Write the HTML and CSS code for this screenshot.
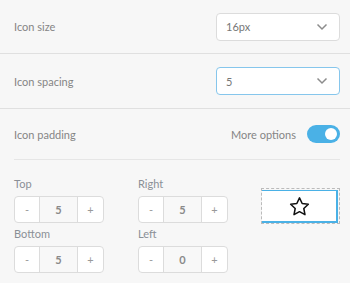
FILE: index.html
```html
<!DOCTYPE html>
<html lang="en">
<head>
    <meta charset="UTF-8">
    <meta name="viewport" content="width=device-width, initial-scale=1.0">
    <title>Icon settings</title>
    <link rel="stylesheet" href="styles.css">
</head>
<body>
    <!-- Icon size -->
    <div class="row">
        <span class="label">Icon size</span>
        <div class="select">
            <span>16px</span>
            <svg class="chevron" width="12" height="8" viewBox="0 0 12 8"><path d="M1.5 1.5l4.5 4.5 4.5-4.5" fill="none" stroke="#8c8c8c" stroke-width="1.5"/></svg>
        </div>
    </div>

    <!-- Icon spacing -->
    <div class="row tall">
        <span class="label">Icon spacing</span>
        <div class="select active">
            <span>5</span>
            <svg class="chevron" width="12" height="8" viewBox="0 0 12 8"><path d="M1.5 1.5l4.5 4.5 4.5-4.5" fill="none" stroke="#8c8c8c" stroke-width="1.5"/></svg>
        </div>
    </div>

    <!-- Icon padding -->
    <div class="row inset">
        <span class="label">Icon padding</span>
        <div class="more">
            <span class="label">More options</span>
            <span class="toggle on"><span class="knob"></span></span>
        </div>
    </div>

    <div class="padding-grid">
        <div class="field">
            <div class="field-label">Top</div>
            <div class="stepper"><span class="btn">-</span><span class="value">5</span><span class="btn">+</span></div>
        </div>
        <div class="field">
            <div class="field-label">Right</div>
            <div class="stepper"><span class="btn">-</span><span class="value">5</span><span class="btn">+</span></div>
        </div>
        <div class="preview">
            <div class="preview-inner">
                <svg width="23" height="23" viewBox="0 0 24 24"><path d="M12 3l2.8 5.9 6.4.8-4.7 4.4 1.2 6.4L12 17.4l-5.7 3.1 1.2-6.4-4.7-4.4 6.4-.8z" fill="none" stroke="#111" stroke-width="1.6" stroke-linejoin="round"/></svg>
            </div>
        </div>
        <div class="field">
            <div class="field-label">Bottom</div>
            <div class="stepper"><span class="btn">-</span><span class="value">5</span><span class="btn">+</span></div>
        </div>
        <div class="field">
            <div class="field-label">Left</div>
            <div class="stepper"><span class="btn">-</span><span class="value">0</span><span class="btn">+</span></div>
        </div>
    </div>
</body>
</html>
```

FILE: styles.css
```css
body {
    margin: 0;
    background: #f7f7f7;
    font-family: Lato, "Open Sans", sans-serif;
    font-size: 11px;
    color: #888;
}
.row {
    display: flex;
    align-items: center;
    justify-content: space-between;
    height: 53px;
    padding: 0 10px 0 14px;
    border-bottom: 1px solid #e0e0e0;
}
.row.tall {
    height: 54px;
}
.row.inset {
    height: 50px;
    padding: 0;
    margin: 0 10px 0 14px;
    border-bottom-color: #e6e6e6;
}
.label {
    color: #858585;
}
.select {
    box-sizing: border-box;
    width: 124px;
    height: 28px;
    display: flex;
    align-items: center;
    justify-content: space-between;
    padding: 0 11px 0 9px;
    background: #fff;
    border: 1px solid #dcdcdc;
    border-radius: 4px;
    color: #777;
}
.select.active {
    border-color: #86c6ec;
}
.more {
    display: flex;
    align-items: center;
    gap: 11px;
}
.toggle {
    position: relative;
    width: 33px;
    height: 18px;
    border-radius: 9px;
    background: #ccc;
}
.toggle.on {
    background: #4ab1e6;
}
.knob {
    position: absolute;
    top: 3px;
    right: 3px;
    width: 12px;
    height: 12px;
    border-radius: 50%;
    background: #fff;
}
.padding-grid {
    display: grid;
    grid-template-columns: 124px 123px 79px;
    row-gap: 4px;
    padding: 17px 10px 0 14px;
}
.field-label {
    line-height: 14px;
    margin-bottom: 5px;
    color: #8a8f96;
}
.stepper {
    box-sizing: border-box;
    display: flex;
    width: 90px;
    height: 27px;
    background: #fff;
    border: 1px solid #dcdcdc;
    border-radius: 4px;
    overflow: hidden;
}
.stepper span {
    display: flex;
    align-items: center;
    justify-content: center;
}
.btn {
    width: 24px;
    color: #999;
}
.btn:last-child {
    flex: 1;
}
.value {
    width: 37px;
    border-left: 1px solid #dcdcdc;
    border-right: 1px solid #dcdcdc;
    background: #f8f8f8;
    font-weight: bold;
    color: #8a8a8a;
}
.preview {
    grid-row: span 2;
    align-self: start;
    box-sizing: border-box;
    height: 36px;
    margin-top: 11px;
    border: 1px dashed #bbb;
    padding-top: 1px;
    padding-right: 1px;
}
.preview-inner {
    box-sizing: border-box;
    height: 100%;
    display: flex;
    align-items: center;
    justify-content: center;
    background: #fff;
    border-top: 1px solid #4ab1e6;
    border-right: 2px solid #4ab1e6;
    border-bottom: 2px solid #4ab1e6;
}
```
